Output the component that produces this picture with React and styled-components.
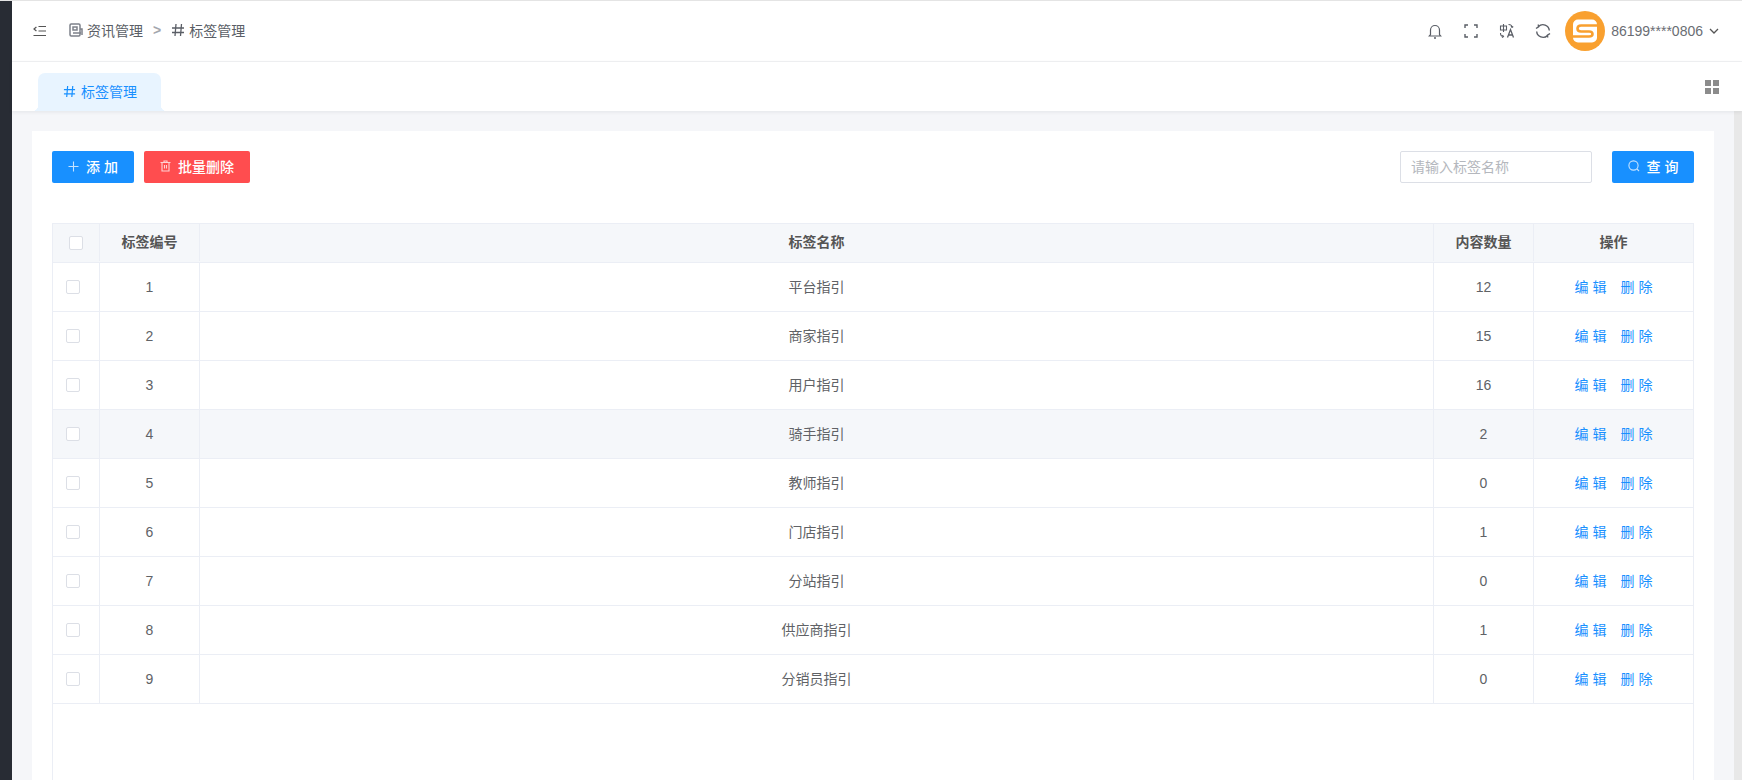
import styled, { createGlobalStyle } from "styled-components";

const GlobalStyle = createGlobalStyle`
  * { box-sizing: border-box; }
  html, body { margin: 0; height: 100%; overflow: hidden; }
  body {
    font-family: "Liberation Sans", "Noto Sans CJK SC", sans-serif;
    font-size: 14px;
    color: #606266;
    background: #fff;
  }
`;

const Layout = styled.div`
  display: flex;
  height: 100vh;
`;

const Sidebar = styled.aside`
  width: 12px;
  flex: none;
  background: #282c34;
  border-top: 1px solid #e4e4e4;
`;

const Main = styled.div`
  flex: 1;
  min-width: 0;
  display: flex;
  flex-direction: column;
  border-top: 1px solid #e4e4e4;
`;

const TopBar = styled.header`
  height: 61px;
  flex: none;
  display: flex;
  align-items: center;
  padding: 0 23px 0 21px;
  border-bottom: 1px solid #f1f2f4;
`;

const Crumbs = styled.div`
  display: flex;
  align-items: center;
  margin-left: 22px;
  padding-bottom: 2px;
  color: #5a5e66;
  font-size: 14px;
`;

const Crumb = styled.span`
  display: flex;
  align-items: center;
  gap: 4px;
`;

const Sep = styled.span`
  margin: 0 10px;
  color: #a3a6ad;
  font-size: 14px;
  font-weight: 700;
`;

const Tools = styled.div`
  margin-left: auto;
  display: flex;
  align-items: center;
  gap: 20px;
  color: #5a5e66;
`;

const User = styled.div`
  display: flex;
  align-items: center;
  gap: 6px;
  margin-left: -6px;
  font-size: 14px;
  color: #6a6d73;
`;

const TabBar = styled.div`
  height: 49px;
  flex: none;
  display: flex;
  align-items: flex-end;
  justify-content: space-between;
  padding: 0 23px 0 20px;
  background: #fff;
  box-shadow: 0 1px 4px rgba(0, 21, 41, 0.08);
  position: relative;
  z-index: 1;
`;

const Tab = styled.div`
  position: relative;
  width: 123px;
  height: 38px;
  margin-left: 6px;
  padding: 0 0 2px 1px;
  display: flex;
  align-items: center;
  justify-content: center;
  gap: 5px;
  color: #1890ff;
  background: #e8f4ff;
  border-radius: 7px 7px 0 0;
  font-size: 14px;

  &::before,
  &::after {
    content: "";
    position: absolute;
    bottom: 0;
    width: 6px;
    height: 6px;
    background: radial-gradient(circle at 0 0, transparent 6px, #e8f4ff 6.5px);
  }
  &::before { left: -6px; }
  &::after {
    right: -6px;
    background: radial-gradient(circle at 100% 0, transparent 6px, #e8f4ff 6.5px);
  }
`;

const GridBtn = styled.div`
  align-self: center;
  display: flex;
  color: #8c8c8c;
`;

const Body = styled.div`
  flex: 1;
  min-height: 0;
  display: flex;
`;

const Content = styled.main`
  flex: 1;
  min-width: 0;
  background: #f5f6f9;
  padding: 20px 20px 0;
`;

const Scrollbar = styled.div`
  width: 8px;
  flex: none;
  background: #e8e8e8;
`;

const Card = styled.section`
  height: 100%;
  background: #fff;
  padding: 20px 20px 0;
  display: flex;
  flex-direction: column;
`;

const Toolbar = styled.div`
  display: flex;
  align-items: center;
  gap: 10px;
  height: 32px;
  margin-bottom: 40px;
`;

const Button = styled.button`
  height: 32px;
  width: ${({ $w }) => $w}px;
  padding: 0 0 2px ${({ $spaced }) => ($spaced ? "4px" : "0")};
  border: 0;
  border-radius: 2px;
  display: flex;
  align-items: center;
  justify-content: center;
  gap: 7px;
  color: #fff;
  font: inherit;
  font-size: 14px;
  font-weight: 500;
  letter-spacing: ${({ $spaced }) => ($spaced ? "4px" : "0")};
  background: ${({ $danger }) => ($danger ? "#ff4d4f" : "#1890ff")};

  svg { opacity: 0.75; }
`;

const SearchInput = styled.input`
  margin-left: auto;
  width: 192px;
  height: 32px;
  margin-right: 10px;
  padding: 0 10px 1px;
  border: 1px solid #dcdfe6;
  border-radius: 2px;
  font: inherit;
  font-size: 14px;
  outline: none;

  &::placeholder { color: #b4b7bd; }
`;

const TableFrame = styled.div`
  flex: 1;
  min-height: 0;
  border-left: 1px solid #ebeef5;
  border-right: 1px solid #ebeef5;
`;

const Row = styled.div`
  display: grid;
  grid-template-columns: 46px 100px 1fr 100px 160px;
  height: ${({ $head }) => ($head ? "40px" : "49px")};
  padding-bottom: ${({ $head }) => ($head ? "1px" : "0")};
  border-bottom: 1px solid #ebeef5;
  border-top: ${({ $head }) => ($head ? "1px solid #ebeef5" : "0")};
  background: ${({ $head, $hover }) => ($head || $hover ? "#f5f7fa" : "#fff")};
  color: ${({ $head }) => ($head ? "#555" : "#606266")};
  font-weight: ${({ $head }) => ($head ? 700 : 400)};
`;

// CJK glyphs sit lower than the latin ones in this stack, $lift evens them out
const Cell = styled.div`
  display: flex;
  align-items: center;
  justify-content: center;
  min-width: 0;
  padding-bottom: ${({ $lift }) => $lift || 0}px;
  & + & { border-left: 1px solid #ebeef5; }
`;

const ActionCell = styled(Cell)`
  padding-left: 4px;
`;

const Check = styled.span`
  width: 14px;
  height: 14px;
  background: #fff;
  border: 1px solid #dcdfe6;
  border-radius: 2px;
  margin-left: ${({ $left }) => ($left ? "-6px" : "0")};
`;

const Action = styled.a`
  color: #1890ff;
  letter-spacing: 4px;
  margin: 0 5px;
  cursor: pointer;
`;

const HashIcon = ({ size = 14 }) => (
  <svg width={size} height={size} viewBox="0 0 14 14" fill="none" stroke="currentColor" strokeWidth="1.3">
    <path d="M5 1 4 13M10.500 1 9.500 13M1 5h12M1 9.500h12" />
  </svg>
);

const MenuIcon = () => (
  <svg width="14" height="14" viewBox="0 0 14 14" fill="none" stroke="#555" strokeWidth="1.2">
    <path d="M5.500 7H13M5.500 2.500H13M0.500 11.500H13" />
    <path d="M3.400 3 1 5 3.400 7" />
  </svg>
);

const DocIcon = () => (
  <svg width="14" height="14" viewBox="0 0 14 14" fill="none" stroke="#7d818a" strokeWidth="1.5">
    <rect x="1" y="1" width="10" height="12" rx="1.2" />
    <path d="M4 4h4v3H4zM4 10h8M11 6h2v6" />
  </svg>
);

const BellIcon = () => (
  <svg width="16" height="16" viewBox="0 0 16 16" fill="none" stroke="currentColor" strokeWidth="1.2">
    <path d="M3.500 11.500V7a4.500 4.500 0 0 1 9 0v4.500l1.200 1.500H2.300z" />
    <path d="M7 15h2" strokeWidth="1.600" />
  </svg>
);

const FullIcon = () => (
  <svg width="16" height="16" viewBox="0 0 16 16" fill="none" stroke="currentColor" strokeWidth="1.4">
    <path d="M2 5V2h3M11 2h3v3M14 11v3h-3M5 14H2v-3" />
  </svg>
);

const LangIcon = () => (
  <svg width="16" height="16" viewBox="0 0 16 16" fill="none" stroke="currentColor" strokeWidth="1.100">
    <path d="M1.500 3h6v4h-6zM4.500 1v8" />
    <path d="M1.500 10c0 2.500 1 3.500 3 3.500M3 14.500l1.500-1-1-1.300" />
    <path d="M9.500 1.500c2.500 0 3.500 1 3.500 3M12 3l1 1.500 1.200-1" />
    <path d="M8.500 14.500 11.500 6.500l3 8M9.500 12h4" strokeWidth="1.300" />
  </svg>
);

const RefreshIcon = () => (
  <svg width="16" height="16" viewBox="0 0 16 16" fill="none" stroke="currentColor" strokeWidth="1.400">
    <path d="M1.700 8.500A6.300 6.300 0 0 0 12.500 12.400M14.300 7.500A6.300 6.300 0 0 0 3.500 3.600" />
    <path d="M1 5.500 3.500 3.800 3.300 1.500M15 10.500l-2.500 1.700.2 2.300" />
  </svg>
);

const Logo = () => (
  <svg width="40" height="40" viewBox="0 0 40 40">
    <circle cx="20" cy="20" r="20" fill="#f9a02f" />
    <rect x="8" y="8.500" width="24" height="23" rx="5" fill="#fff" />
    <path
      d="M33 14.500H16Q12.500 14.500 12.500 17.500T16 20.500H24Q27.500 20.500 27.500 23T24 25.500H7"
      fill="none"
      stroke="#f9a02f"
      strokeWidth="2.600"
    />
  </svg>
);

const ChevronIcon = () => (
  <svg width="10" height="10" viewBox="0 0 10 10" fill="none" stroke="#555" strokeWidth="1.300">
    <path d="M1 3l4 4 4-4" />
  </svg>
);

const GridIcon = () => (
  <svg width="14" height="14" viewBox="0 0 14 14" fill="currentColor">
    <rect width="6" height="6" />
    <rect x="8" width="6" height="6" />
    <rect y="8" width="6" height="6" />
    <rect x="8" y="8" width="6" height="6" />
  </svg>
);

const PlusIcon = () => (
  <svg width="11" height="11" viewBox="0 0 11 11" fill="none" stroke="currentColor" strokeWidth="1.100">
    <path d="M5.500 0.500v10M0.500 5.500h10" />
  </svg>
);

const TrashIcon = () => (
  <svg width="11" height="12" viewBox="0 0 11 12" fill="none" stroke="currentColor" strokeWidth="1.100">
    <path d="M0.500 2.500h10M4 2.500V1h3v1.500M2 2.500V11h7V2.500M4.500 5v3.500M6.500 5v3.500" />
  </svg>
);

const SearchIcon = () => (
  <svg width="12" height="12" viewBox="0 0 12 12" fill="none" stroke="currentColor" strokeWidth="1.100">
    <circle cx="5.500" cy="5.500" r="4.600" />
    <path d="M9 9 11 11" />
  </svg>
);

const tags = [
  { id: 1, name: "平台指引", count: 12 },
  { id: 2, name: "商家指引", count: 15 },
  { id: 3, name: "用户指引", count: 16 },
  { id: 4, name: "骑手指引", count: 2 },
  { id: 5, name: "教师指引", count: 0 },
  { id: 6, name: "门店指引", count: 1 },
  { id: 7, name: "分站指引", count: 0 },
  { id: 8, name: "供应商指引", count: 1 },
  { id: 9, name: "分销员指引", count: 0 },
];

const App = () => {
  return (
    <Layout>
      <GlobalStyle />
      <Sidebar />
      <Main>
        <TopBar>
          <MenuIcon />
          <Crumbs>
            <Crumb>
              <DocIcon />
              资讯管理
            </Crumb>
            <Sep>&gt;</Sep>
            <Crumb>
              <HashIcon />
              标签管理
            </Crumb>
          </Crumbs>
          <Tools>
            <BellIcon />
            <FullIcon />
            <LangIcon />
            <RefreshIcon />
            <User>
              <Logo />
              <span>86199****0806</span>
              <ChevronIcon />
            </User>
          </Tools>
        </TopBar>
        <TabBar>
          <Tab>
            <HashIcon size={13} />
            标签管理
          </Tab>
          <GridBtn>
            <GridIcon />
          </GridBtn>
        </TabBar>
        <Body>
          <Content>
            <Card>
              <Toolbar>
                <Button $w={82} $spaced>
                  <PlusIcon />
                  添加
                </Button>
                <Button $w={106} $danger>
                  <TrashIcon />
                  批量删除
                </Button>
                <SearchInput placeholder="请输入标签名称" />
                <Button $w={82} $spaced>
                  <SearchIcon />
                  查询
                </Button>
              </Toolbar>
              <TableFrame>
                <Row $head>
                  <Cell>
                    <Check />
                  </Cell>
                  <Cell $lift={3}>标签编号</Cell>
                  <Cell $lift={3}>标签名称</Cell>
                  <Cell $lift={3}>内容数量</Cell>
                  <Cell $lift={3}>操作</Cell>
                </Row>
                {tags.map((tag) => (
                  <Row key={tag.id} $hover={tag.id === 4}>
                    <Cell>
                      <Check $left />
                    </Cell>
                    <Cell>{tag.id}</Cell>
                    <Cell $lift={2}>{tag.name}</Cell>
                    <Cell>{tag.count}</Cell>
                    <ActionCell $lift={2}>
                      <Action>编辑</Action>
                      <Action>删除</Action>
                    </ActionCell>
                  </Row>
                ))}
              </TableFrame>
            </Card>
          </Content>
          <Scrollbar />
        </Body>
      </Main>
    </Layout>
  );
};

export default App;
